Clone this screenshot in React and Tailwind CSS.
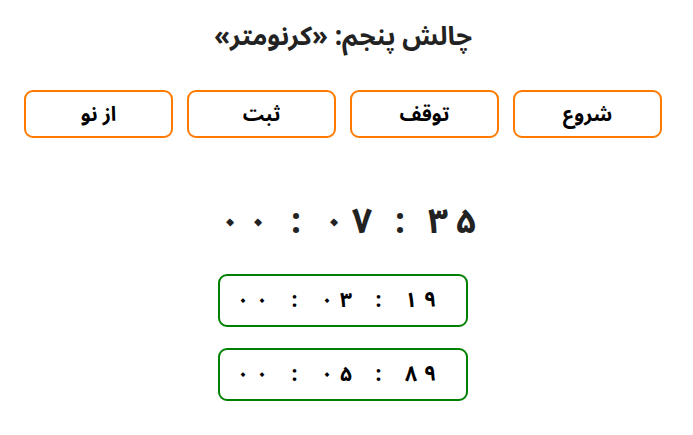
function Digits({ text, digitW, colonW }) {
  return (
    <div dir="ltr" className="flex">
      {text.split("").map((c, i) =>
        c === ":" ? (
          <span key={i} className={colonW + " text-center"}>:</span>
        ) : (
          <span key={i} className={digitW + " text-center"}>{c}</span>
        )
      )}
    </div>
  );
}

export default function App() {
  return (
    <div dir="rtl" className="w-[693px] h-[435px] bg-white text-[#222] font-['Noto_Sans_Arabic',sans-serif] flex flex-col items-center pr-[7px]">
      <h1 className="mt-[15px] text-[26px] font-bold leading-[44px]">چالش پنجم: «کرنومتر»</h1>
      <div className="mt-[31px] flex gap-[14px]">
        {["شروع", "توقف", "ثبت", "از نو"].map((t) => (
          <button key={t} className="w-[149px] h-[48px] border-2 border-[#ff7a00] rounded-[9px] bg-white text-black text-[20px] font-bold leading-[30px] pt-[2px]">
            {t}
          </button>
        ))}
      </div>
      <div className="mt-[62px] pl-[10px] text-[35px] font-bold leading-[44px]">
        <Digits text="۰۰:۰۷:۳۵" digitW="w-[28px]" colonW="w-[48px]" />
      </div>
      <div className="mt-[30px] flex flex-col gap-[21px]">
        {["۰۰:۰۳:۱۹", "۰۰:۰۵:۸۹"].map((t) => (
          <div key={t} className="w-[250px] h-[53px] border-2 border-[#008000] rounded-[9px] flex items-center justify-center pr-[13px] text-black text-[21px] font-bold">
            <Digits text={t} digitW="w-[19px]" colonW="w-[46px]" />
          </div>
        ))}
      </div>
    </div>
  );
}
